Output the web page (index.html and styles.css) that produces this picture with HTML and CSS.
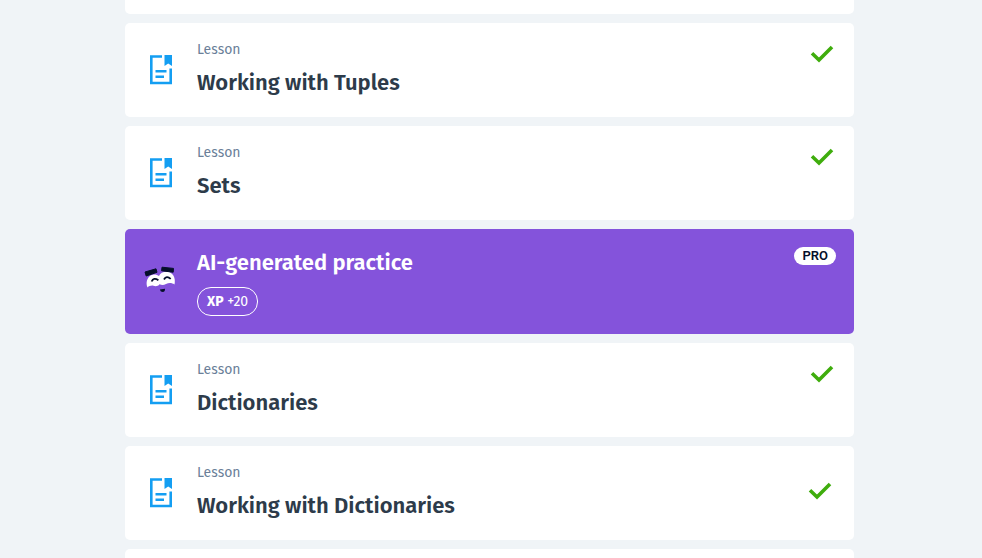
FILE: index.html
```html
<!DOCTYPE html>
<html lang="en">
<head>
<meta charset="utf-8">
<meta name="viewport" content="width=device-width, initial-scale=1">
<title>Lessons</title>
<link rel="stylesheet" href="styles.css">
</head>
<body>
<svg class="symbols" aria-hidden="true">
  <symbol id="lesson" viewBox="0 0 24 30">
    <path d="M13 1.500H2.300V28H21.700V13.500" fill="none" stroke="currentColor" stroke-width="2.600"/>
    <path d="M15.500 0H23V11L19.200 8.500L15.500 11Z" fill="currentColor"/>
    <path d="M6.500 16.300H17.500M6.500 21.700H15" fill="none" stroke="currentColor" stroke-width="2.600"/>
  </symbol>
  <symbol id="check" viewBox="0 0 24 18">
    <path d="M2 8.300L9 15L22 2" fill="none" stroke="currentColor" stroke-width="3.600"/>
  </symbol>
</svg>
<main class="lessons">
  <div class="card"></div>
  <a class="card" href="#tuples">
    <svg class="icon" aria-hidden="true"><use href="#lesson"/></svg>
    <div class="info"><span class="kind">Lesson</span><h2 class="title">Working with Tuples</h2></div>
    <svg class="check" role="img" aria-label="Completed"><use href="#check"/></svg>
  </a>
  <a class="card" href="#sets">
    <svg class="icon" aria-hidden="true"><use href="#lesson"/></svg>
    <div class="info"><span class="kind">Lesson</span><h2 class="title">Sets</h2></div>
    <svg class="check" role="img" aria-label="Completed"><use href="#check"/></svg>
  </a>
  <a class="card practice" href="#practice">
    <svg class="face" viewBox="0 0 32 28" aria-hidden="true">
      <path d="M3.500 21.500C1.500 17 3 11.500 7 9.300C10 7.700 13 8.500 15 10C16 7 19.500 5.500 23 5.700C29 6 32 12 30.500 18.500C28 16.800 25 16.500 22 18C19.500 19.300 17.500 19 15.500 18.200C14 20.300 11.500 20.500 9.500 19.700C7 19.300 5 20 3.500 21.500Z" fill="#fff"/>
      <path d="M1 6L12 2.800L13 6.300L2.200 10Z M18 1.200L29.500 2.400L29.200 6.200L17.600 4.800Z" fill="#050f2a" stroke="#050f2a" stroke-linejoin="round"/>
      <path d="M7.600 15.500Q9.500 11 14.400 14.200M20 13.500Q22.500 9 26.700 12.800" fill="none" stroke="#050f2a" stroke-width="1.800"/>
      <path d="M15.800 23.500L21 22.800Q21 26 18.800 26Q16.500 26 15.800 23.500Z" fill="#050f2a"/>
    </svg>
    <div class="info"><h2 class="title">AI-generated practice</h2><span class="xp"><b>XP</b> +20</span></div>
    <span class="pro">PRO</span>
  </a>
  <a class="card" href="#dictionaries">
    <svg class="icon" aria-hidden="true"><use href="#lesson"/></svg>
    <div class="info"><span class="kind">Lesson</span><h2 class="title">Dictionaries</h2></div>
    <svg class="check" role="img" aria-label="Completed"><use href="#check"/></svg>
  </a>
  <a class="card current" href="#working-with-dictionaries">
    <svg class="icon" aria-hidden="true"><use href="#lesson"/></svg>
    <div class="info"><span class="kind">Lesson</span><h2 class="title">Working with Dictionaries</h2></div>
    <svg class="check" role="img" aria-label="Completed"><use href="#check"/></svg>
  </a>
  <div class="card"></div>
</main>
</body>
</html>
```
FILE: styles.css
```css
* { box-sizing: border-box; }

body {
  margin: 0;
  height: 100vh;
  overflow: hidden;
  background: #f0f4f7;
  font-family: "Fira Sans", "Noto Sans", sans-serif;
}

.symbols { display: none; }

.lessons {
  display: flex;
  flex-direction: column;
  gap: 9px;
  margin: -80px 128px 0 125px;
}

.card {
  display: flex;
  flex-shrink: 0;
  align-items: flex-start;
  min-height: 94px;
  padding: 17px 20px;
  border-radius: 5px;
  background: #fff;
  color: #2d3b4a;
  text-decoration: none;
}

.icon {
  flex: none;
  align-self: center;
  width: 24px;
  height: 30px;
  margin: 0 24px 0 4px;
  color: #149ef2;
}

.info { flex: 1; }

.kind {
  display: block;
  color: #6b7f99;
  font-size: 14px;
  line-height: 20px;
}

.title {
  margin: 8px 0 0;
  font-size: 22px;
  font-weight: 600;
  line-height: 30px;
}

.check {
  flex: none;
  width: 24px;
  height: 18px;
  margin-top: 5px;
  color: #3fad0d;
}

.current .check {
  align-self: center;
  margin: 0 2px 4px 0;
}

.practice {
  min-height: 105px;
  padding: 18px 18px 18px 19px;
  background: #8453db;
  color: #fff;
}

.face {
  flex: none;
  align-self: center;
  width: 32px;
  height: 28px;
  margin: 0 21px 4px 0;
}

.practice .title {
  margin: 0 0 8px;
  line-height: 32px;
}

.xp {
  display: inline-block;
  padding: 0 9px;
  border: 1px solid #fff;
  border-radius: 14px;
  font-size: 14px;
  line-height: 27px;
}

.pro {
  padding: 0 8px;
  border-radius: 9px;
  background: #fff;
  color: #050f2a;
  font-family: Roboto, sans-serif;
  font-size: 13px;
  font-weight: 600;
  line-height: 18px;
}
```
